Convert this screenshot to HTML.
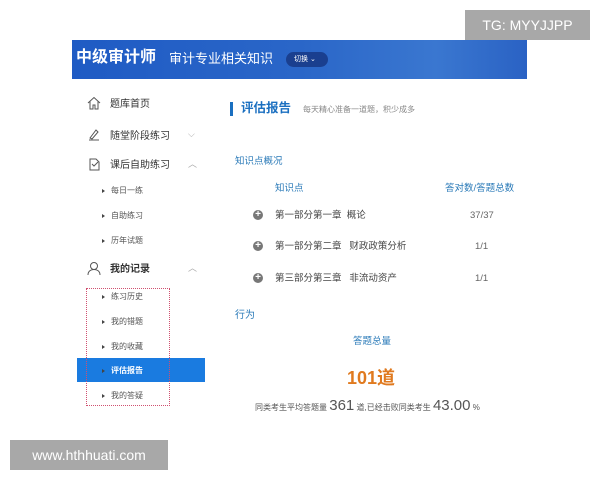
<!DOCTYPE html><html><head><meta charset="utf-8"><style>
body{margin:0;width:600px;height:480px;background:#fff;position:relative;overflow:hidden;font-family:"Liberation Sans","Noto Sans CJK SC",sans-serif}
.a{position:absolute;white-space:nowrap;line-height:1.2}
.hd{left:72px;top:40px;width:455px;height:39px;background:linear-gradient(90deg,#1f5bc4,#2a66c8 50%,#3a77d0 80%,#2a62c4)}
.sb{font-size:10px;color:#333}
.sub{font-size:8px;color:#555}
.sub:before{content:"";position:absolute;left:-9px;top:3px;border-left:3px solid #444;border-top:2.5px solid transparent;border-bottom:2.5px solid transparent}
.bl{color:#2a7ab8}
.pl{width:10px;height:10px;border-radius:50%;background:#777;color:#fff;font-size:10px;line-height:10px;text-align:center;font-weight:bold}
.r{font-size:9.5px;color:#444;line-height:12px}
.v{font-size:9.5px;color:#666;line-height:12px}
</style></head><body>
<div class="a hd"></div>
<div class="a" style="left:76px;top:48px;font-size:16px;font-weight:bold;color:#fff">中级审计师</div>
<div class="a" style="left:169px;top:51px;font-size:13px;color:#fff">审计专业相关知识</div>
<div class="a" style="left:286px;top:52px;width:42px;height:15px;border-radius:8px;background:#1a3f8f;color:#fff;font-size:7px;line-height:15px;padding-left:8px;box-sizing:border-box">切换 ⌄</div>
<svg class="a" style="left:87px;top:96px" width="14" height="14" viewBox="0 0 14 14" fill="none" stroke="#555" stroke-width="1"><path d="M1 7L7 1.5 13 7M3 5.5V13h3V9h2v4h3V5.5"/></svg>
<div class="a sb" style="left:110px;top:99px">题库首页</div>
<svg class="a" style="left:87px;top:128px" width="14" height="14" viewBox="0 0 14 14" fill="none" stroke="#555"><path d="M2 12h10M3 10l6-8 2 2-6 7z"/></svg>
<div class="a sb" style="left:110px;top:131px">随堂阶段练习</div>
<div class="a" style="left:188px;top:129px;font-size:9px;color:#aaa">⌵</div>
<svg class="a" style="left:87px;top:157px" width="14" height="14" viewBox="0 0 14 14" fill="none" stroke="#555"><path d="M3 2h6l3 3v8H3zM5 7l2 2 4-4"/></svg>
<div class="a sb" style="left:110px;top:160px">课后自助练习</div>
<div class="a" style="left:188px;top:159px;font-size:9px;color:#aaa">︿</div>
<div class="a sub" style="left:111px;top:186px">每日一练</div>
<div class="a sub" style="left:111px;top:211px">自助练习</div>
<div class="a sub" style="left:111px;top:236px">历年试题</div>
<svg class="a" style="left:87px;top:261px" width="14" height="14" viewBox="0 0 14 14" fill="none" stroke="#555"><circle cx="7" cy="5" r="3.5"/><path d="M1 14c0-4 3-5.5 6-5.5s6 1.5 6 5.5"/></svg>
<div class="a sb" style="left:110px;top:264px;font-weight:bold">我的记录</div>
<div class="a" style="left:188px;top:263px;font-size:9px;color:#aaa">︿</div>
<div class="a" style="left:77px;top:358px;width:128px;height:24px;background:#1a7be0"></div>
<div class="a" style="left:86px;top:288px;width:84px;height:118px;border:1px dotted #d05070;box-sizing:border-box"></div>
<div class="a sub" style="left:111px;top:292px">练习历史</div>
<div class="a sub" style="left:111px;top:317px">我的错题</div>
<div class="a sub" style="left:111px;top:342px">我的收藏</div>
<div class="a sub" style="left:111px;top:366px;color:#fff;font-weight:bold">评估报告</div>
<div class="a sub" style="left:111px;top:391px">我的答疑</div>
<div class="a" style="left:230px;top:102px;width:3px;height:14px;background:#1a6fc0"></div>
<div class="a" style="left:241px;top:101px;font-size:12.5px;font-weight:bold;color:#1a6fc0">评估报告</div>
<div class="a" style="left:303px;top:105px;font-size:8px;color:#888">每天精心准备一道题，积少成多</div>
<div class="a bl" style="left:235px;top:156px;font-size:9.5px">知识点概况</div>
<div class="a bl" style="left:275px;top:183px;font-size:9.5px">知识点</div>
<div class="a bl" style="left:445px;top:183px;font-size:9.5px">答对数/答题总数</div>
<div class="a pl" style="left:253px;top:210px">+</div><div class="a r" style="left:275px;top:210px">第一部分第一章&nbsp; 概论</div><div class="a v" style="left:470px;top:210px">37/37</div>
<div class="a pl" style="left:253px;top:241px">+</div><div class="a r" style="left:275px;top:241px">第一部分第二章&nbsp;&nbsp; 财政政策分析</div><div class="a v" style="left:475px;top:241px">1/1</div>
<div class="a pl" style="left:253px;top:273px">+</div><div class="a r" style="left:275px;top:273px">第三部分第三章&nbsp;&nbsp; 非流动资产</div><div class="a v" style="left:475px;top:273px">1/1</div>
<div class="a bl" style="left:235px;top:310px;font-size:10px">行为</div>
<div class="a bl" style="left:353px;top:336px;font-size:9.5px">答题总量</div>
<div class="a" style="left:347px;top:368px;font-size:18px;font-weight:bold;color:#e07a1f">101道</div>
<div class="a" style="left:255px;top:397px;font-size:8px;color:#555">同类考生平均答题量 <span style="font-size:15px">361</span> 道,已经击败同类考生 <span style="font-size:15px">43.00</span> %</div>
<div class="a" style="left:465px;top:10px;width:125px;height:30px;background:#a8a8a8;color:#fff;font-size:14px;line-height:30px;text-align:center">TG: MYYJJPP</div>
<div class="a" style="left:10px;top:440px;width:158px;height:30px;background:#a8a8a8;color:#fff;font-size:14px;line-height:30px;text-align:center">www.hthhuati.com</div>
</body></html>
